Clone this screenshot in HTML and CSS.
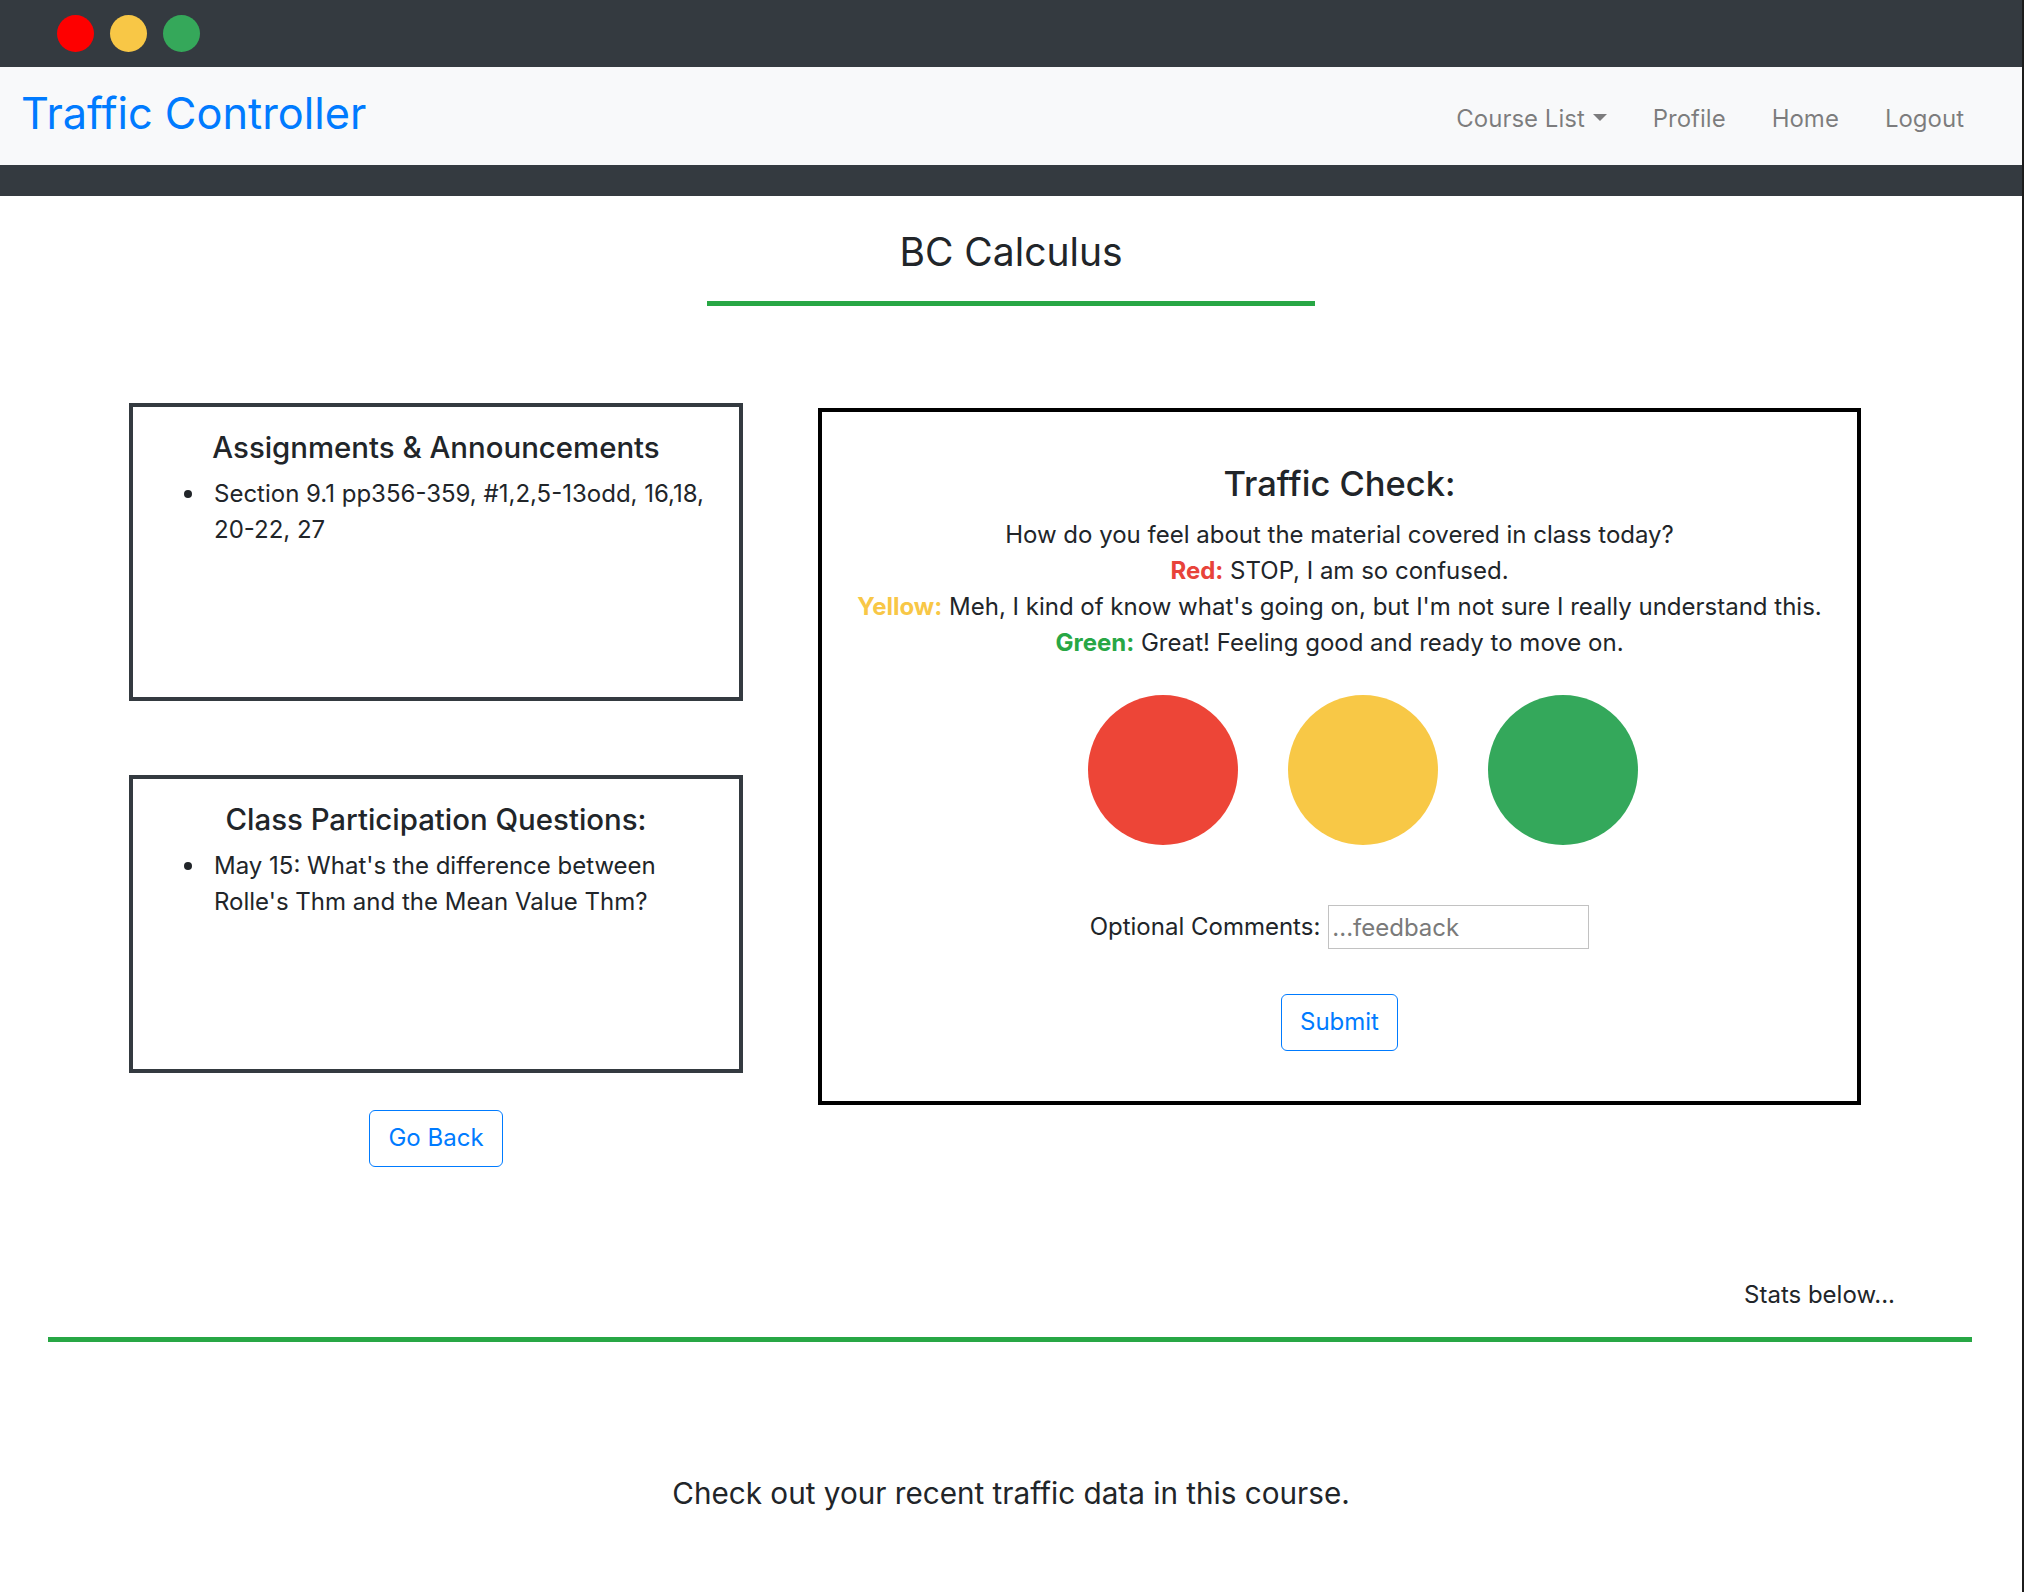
FILE: index.html
```html
<!DOCTYPE html>
<html lang="en">
<head>
    <meta charset="UTF-8">
    <title>Traffic Controller - BC Calculus</title>
    <link rel="stylesheet" href="styles.css">
</head>
<body>
    <!-- window chrome -->
    <div class="window-bar">
        <span class="dot dot-red"></span>
        <span class="dot dot-yellow"></span>
        <span class="dot dot-green"></span>
    </div>

    <nav class="navbar">
        <a class="brand" href="#">Traffic Controller</a>
        <ul class="nav-links">
            <li><a href="#" class="dropdown-toggle">Course List</a></li>
            <li><a href="#">Profile</a></li>
            <li><a href="#">Home</a></li>
            <li><a href="#">Logout</a></li>
        </ul>
    </nav>
    <div class="nav-strip"></div>

    <main>
        <div class="course-header">
            <h2 class="course-title">BC Calculus</h2>
            <div class="title-rule"></div>
        </div>

        <div class="course-row">
            <div class="left-col">
                <div class="info-card">
                    <h5>Assignments &amp; Announcements</h5>
                    <ul>
                        <li>Section 9.1 pp356-359, #1,2,5-13odd, 16,18, 20-22, 27</li>
                    </ul>
                </div>
                <div class="info-card">
                    <h5>Class Participation Questions:</h5>
                    <ul>
                        <li>May 15: What's the difference between Rolle's Thm and the Mean Value Thm?</li>
                    </ul>
                </div>
                <button class="btn-outline go-back">Go Back</button>
            </div>

            <div class="traffic-card">
                <h4>Traffic Check:</h4>
                <p>How do you feel about the material covered in class today?</p>
                <p><b class="label-red">Red:</b> STOP, I am so confused.</p>
                <p><b class="label-yellow">Yellow:</b> Meh, I kind of know what's going on, but I'm not sure I really understand this.</p>
                <p><b class="label-green">Green:</b> Great! Feeling good and ready to move on.</p>

                <div class="lights">
                    <span class="light light-red"></span>
                    <span class="light light-yellow"></span>
                    <span class="light light-green"></span>
                </div>

                <div class="comment-row">
                    <label for="comments">Optional Comments:</label>
                    <input id="comments" type="text" placeholder="...feedback">
                </div>
                <button class="btn-outline submit">Submit</button>
            </div>
        </div>

        <p class="stats-note">Stats below...</p>
        <hr class="stats-rule">
        <p class="lead">Check out your recent traffic data in this course.</p>
    </main>
</body>
</html>
```

FILE: styles.css
```css
html {
    background-color: #1c1c1c;
}

body {
    margin: 0 2px 0 0;
    min-height: 100vh;
    background-color: #fff;
    color: #212529;
    font-family: Inter, "Noto Sans", sans-serif;
    font-size: 24px;
    line-height: 36px;
}

/* fake window bar */
.window-bar {
    height: 67px;
    background-color: #343a40;
    display: flex;
    align-items: center;
    gap: 16px;
    padding-left: 57px;
}

.dot {
    width: 37px;
    height: 37px;
    border-radius: 50%;
}

.dot-red { background-color: #fe0000; }
.dot-yellow { background-color: #f8c746; }
.dot-green { background-color: #35a85a; }

/* navbar */
.navbar {
    height: 98px;
    background-color: #f8f9fa;
    display: flex;
    align-items: center;
    justify-content: space-between;
    padding: 0 35px 0 21px;
}

.brand {
    font-size: 43.3px;
    line-height: 1;
    color: #007bff;
    text-decoration: none;
    margin-bottom: 4px;
}

.nav-links {
    display: flex;
    list-style: none;
    margin: 0;
    padding: 5px 0 0 0;
}

.nav-links a {
    display: block;
    padding: 0 23px;
    color: rgba(0, 0, 0, 0.5);
    text-decoration: none;
}

.dropdown-toggle::after {
    content: '';
    display: inline-block;
    margin-left: 8px;
    vertical-align: 6px;
    border-top: 7px solid;
    border-left: 7px solid transparent;
    border-right: 7px solid transparent;
}

.nav-strip {
    height: 31px;
    background-color: #343a40;
}

/* header */
.course-header {
    text-align: center;
    padding-top: 32px;
}

.course-title {
    margin: 0;
    font-size: 39px;
    line-height: 48px;
    font-weight: 400;
}

.title-rule {
    width: 608px;
    height: 5px;
    margin: 25px auto 0 auto;
    background-color: #28a745;
}

/* main row */
.course-row {
    display: flex;
    align-items: flex-start;
    gap: 75px;
    margin-top: 97px;
    padding-left: 129px;
}

.left-col {
    width: 614px;
    display: flex;
    flex-direction: column;
    align-items: center;
}

.info-card {
    width: 100%;
    height: 298px;
    box-sizing: border-box;
    border: 4px solid #343a40;
    padding: 23px 20px 20px 20px;
}

.info-card + .info-card {
    margin-top: 74px;
}

.info-card h5 {
    margin: 0 0 10px 0;
    font-size: 29.4px;
    line-height: 36px;
    font-weight: 500;
    text-align: center;
}

.info-card ul {
    margin: 0;
    padding-left: 61px;
    list-style: none;
}

.info-card li {
    position: relative;
}

/* round bullet, a bit larger than the default marker */
.info-card li::before {
    content: '';
    position: absolute;
    left: -30px;
    top: 14px;
    width: 8px;
    height: 8px;
    border-radius: 50%;
    background-color: #212529;
}

.btn-outline {
    font-family: inherit;
    font-size: 24px;
    line-height: 36px;
    padding: 9px 18px 10px 18px;
    color: #007bff;
    background-color: #fff;
    border: 1px solid #007bff;
    border-radius: 6px;
    cursor: pointer;
}

.go-back {
    margin-top: 37px;
}

/* traffic check */
.traffic-card {
    width: 1043px;
    box-sizing: border-box;
    border: 4px solid #000;
    margin-top: 5px;
    padding: 50px 20px 50px 20px;
    text-align: center;
}

.traffic-card h4 {
    margin: 0 0 12px 0;
    font-size: 34.5px;
    line-height: 43px;
    font-weight: 500;
}

.traffic-card p {
    margin: 0;
}

.label-red { color: #e8433a; }
.label-yellow { color: #f8c746; }
.label-green { color: #28a745; }

.lights {
    display: flex;
    justify-content: center;
    gap: 50px;
    margin-top: 34px;
    padding-left: 46px;
}

.light {
    width: 150px;
    height: 150px;
    border-radius: 50%;
}

.light-red { background-color: #ed4537; }
.light-yellow { background-color: #f8c846; }
.light-green { background-color: #34a85b; }

.comment-row {
    display: flex;
    justify-content: center;
    align-items: center;
    gap: 8px;
    margin-top: 60px;
}

.comment-row input {
    width: 261px;
    height: 44px;
    box-sizing: border-box;
    border: 1px solid #c2c2c2;
    padding: 0 3px;
    font-family: inherit;
    font-size: 24px;
    color: #212529;
}

.comment-row input::placeholder {
    color: #7a7a7a;
}

.submit {
    margin-top: 45px;
}

/* stats */
.stats-note {
    margin: 110px 127px 0 0;
    text-align: right;
}

.stats-rule {
    margin: 24px 50px 0 48px;
    height: 5px;
    border: 0;
    background-color: #28a745;
}

.lead {
    margin: 129px 0 0 0;
    font-size: 29.7px;
    line-height: 45px;
    text-align: center;
}
```
